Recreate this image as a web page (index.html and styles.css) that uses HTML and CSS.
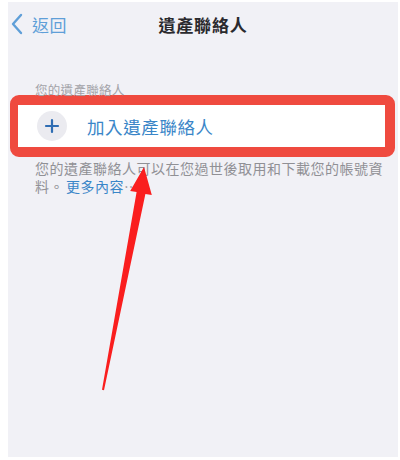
FILE: index.html
```html
<!DOCTYPE html>
<html lang="zh-Hant">
<head>
<meta charset="utf-8">
<title>遺產聯絡人</title>
<link rel="stylesheet" href="styles.css">
</head>
<body>
<div class="screen">
  <header class="nav">
    <div class="back">
      <svg class="chev" width="14" height="22" viewBox="0 0 14 22"><path d="M11 2 L3 11 L11 20" fill="none" stroke="#5f9fd8" stroke-width="2.4" stroke-linecap="round" stroke-linejoin="round"/></svg>
      <span class="back-text">返回</span>
    </div>
    <div class="title">遺產聯絡人</div>
  </header>

  <div class="section-label">您的遺產聯絡人</div>

  <div class="highlight">
    <div class="row">
      <span class="plus">
        <svg width="16" height="16" viewBox="0 0 16 16"><path d="M8 2 V14 M2 8 H14" stroke="#2f6db3" stroke-width="2.2" stroke-linecap="round"/></svg>
      </span>
      <span class="row-text">加入遺產聯絡人</span>
    </div>
  </div>

  <p class="footer">您的遺產聯絡人可以在您過世後取用和下載您的帳號資料。<span class="link">更多內容</span>…</p>

  <svg class="arrow" width="390" height="455" viewBox="0 0 390 455">
    <polygon points="136,165 143.8,193.1 137.4,191.9 96,388.2 94,387.8 128.6,190.1 122.2,188.9" fill="#fa1e1e"/>
  </svg>
</div>
</body>
</html>
```

FILE: styles.css
```css
html, body {
  margin: 0;
  padding: 0;
  background: #ffffff;
}

body {
  font-family: "Noto Sans CJK TC", "Noto Sans", sans-serif;
}

.screen {
  position: relative;
  margin: 2px 2px 0 8px;
  height: 455px;
  background: #f1f1f6;
  overflow: hidden;
}

.nav {
  position: relative;
  height: 44px;
  display: flex;
  align-items: center;
  justify-content: center;
}

.back {
  position: absolute;
  left: 2px;
  top: 0;
  height: 44px;
  display: flex;
  align-items: center;
  gap: 8px;
}

.chev {
  display: block;
}

.back-text {
  font-size: 17px;
  color: #5f9fd8;
  letter-spacing: 0.5px;
}

.title {
  font-size: 17px;
  font-weight: 700;
  color: #2a2a2e;
  letter-spacing: 0.8px;
}

.section-label {
  margin: 38px 0 0 27px;
  font-size: 12.5px;
  line-height: 12px;
  color: #a3a3a8;
  letter-spacing: 0.3px;
}

.highlight {
  margin: -1px 3px 0 2px;
  border: 9px solid #ef4a3f;
  border-width: 10px 10px 10px 8px;
  border-radius: 9px;
  background: #ffffff;
}

.row {
  height: 42px;
  display: flex;
  align-items: center;
  padding-left: 19px;
  background: #ffffff;
}

.plus {
  width: 30px;
  height: 30px;
  border-radius: 50%;
  background: #ebebf0;
  display: flex;
  align-items: center;
  justify-content: center;
}

.row-text {
  margin-left: 20px;
  font-size: 17.5px;
  color: #3a86c8;
  letter-spacing: 0.6px;
}

.footer {
  margin: 2px 0 0 27px;
  width: 355px;
  font-size: 14px;
  line-height: 18px;
  letter-spacing: 0.5px;
  color: #909095;
}

.link {
  color: #3a86c8;
  margin-left: 2px;
}

.arrow {
  position: absolute;
  left: 0;
  top: 0;
}
```
